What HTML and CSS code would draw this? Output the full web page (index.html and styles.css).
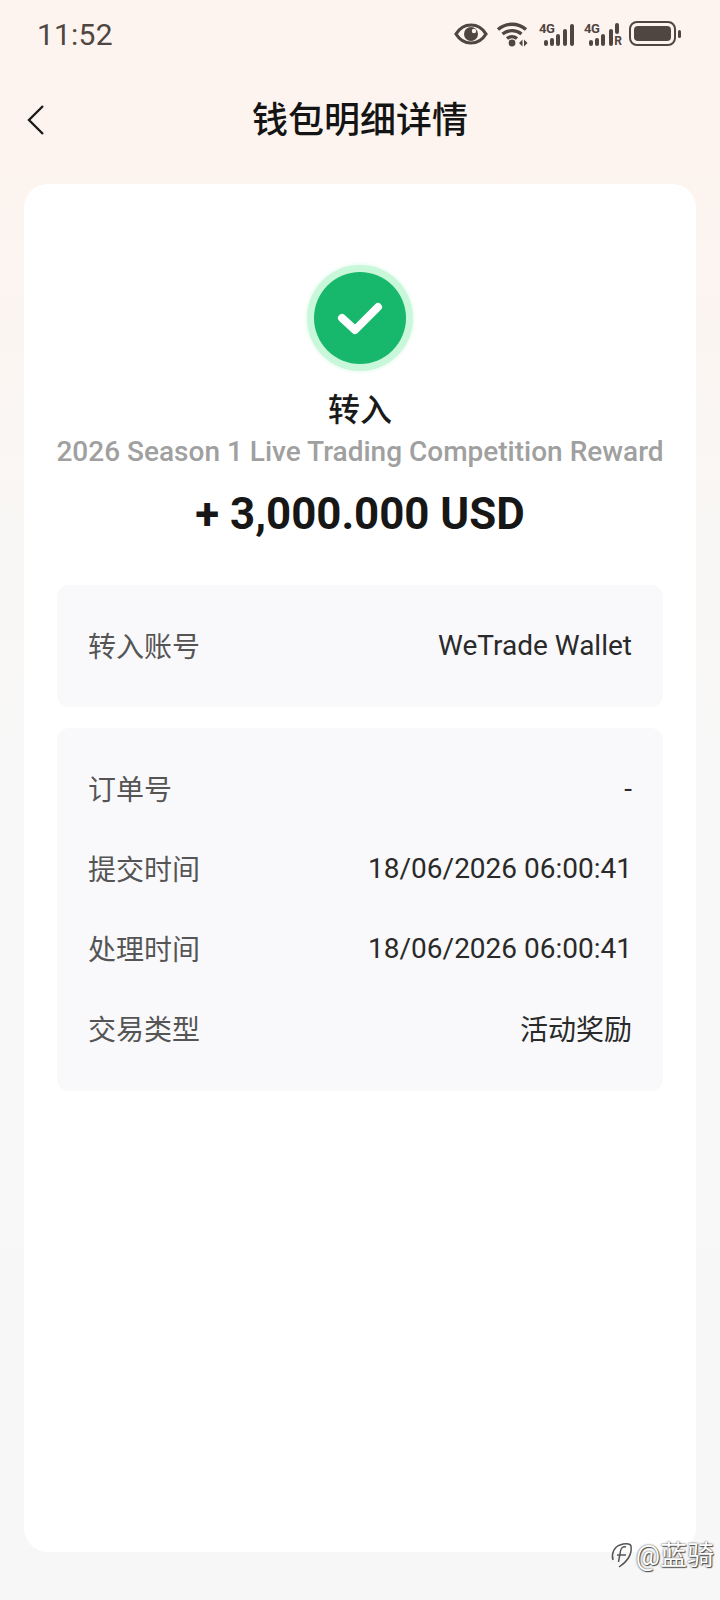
FILE: index.html
```html
<!DOCTYPE html>
<html lang="zh-CN">
<head>
  <meta charset="UTF-8" />
  <meta name="viewport" content="width=device-width, initial-scale=1.0"/>
  <title>钱包明细详情</title>
  <link rel="stylesheet" href="styles.css">
</head>
<body>
  <div class="page">
    <div class="status-bar">
      <span class="clock">11:52</span>
      <div class="status-icons">
        <svg class="eye" width="34" height="24" viewBox="0 0 34 24">
          <path d="M2 12C6 5.500 11 3 17 3s11 2.500 15 9c-4 6.500-9 9-15 9S6 18.500 2 12z" fill="none" stroke="#4f4642" stroke-width="3.200"/>
          <circle cx="17" cy="12" r="7" fill="#4f4642"/>
          <circle cx="20" cy="9" r="2.200" fill="#fdf3ee"/>
        </svg>
        <svg class="wifi" width="34" height="26" viewBox="0 0 34 26">
          <path d="M2 8.500C10 1.500 22 1.500 30 8.500M6.500 13C12 8.500 20 8.500 25.500 13M11 17.500c3-2.400 7-2.400 10 0" fill="none" stroke="#4f4642" stroke-width="3.400"/>
          <circle cx="16" cy="22" r="3.400" fill="#4f4642"/>
          <path d="M23 22l3.500-3.500v7zM28 18.500l3.500 3.500-3.500 3.500z" fill="#4f4642"/>
        </svg>
        <div class="signal">
          <span class="net">4G</span>
          <svg width="40" height="26" viewBox="0 0 40 26">
            <g fill="#4f4642"><rect x="5" y="19" width="4" height="6" rx="2"/><rect x="11" y="17" width="4" height="8" rx="2"/><rect x="17" y="13" width="4" height="12" rx="2"/><rect x="24" y="8" width="4" height="17" rx="2"/><rect x="31" y="3" width="4" height="22" rx="2"/></g>
          </svg>
        </div>
        <div class="signal">
          <span class="net">4G</span>
          <svg width="40" height="26" viewBox="0 0 40 26">
            <g fill="#4f4642"><rect x="5" y="19" width="4" height="6" rx="2"/><rect x="11" y="17" width="4" height="8" rx="2"/><rect x="17" y="13" width="4" height="12" rx="2"/><rect x="25" y="8" width="4" height="17" rx="2"/><rect x="31" y="2" width="4" height="11" rx="2"/></g>
          </svg>
          <span class="roam">R</span>
        </div>
        <div class="battery"><div class="battery-fill"></div></div>
        <div class="battery-cap"></div>
      </div>
    </div>

    <div class="nav-bar">
      <svg class="back" width="20" height="32" viewBox="0 0 20 32">
        <path d="M17 2L3 16l14 14" fill="none" stroke="#1c1c1c" stroke-width="2.400"/>
      </svg>
      <h1>钱包明细详情</h1>
    </div>

    <div class="card">
      <div class="result-icon">
        <svg width="92" height="92" viewBox="0 0 92 92">
          <circle cx="46" cy="46" r="46" fill="#17b76c"/>
          <path d="M28 46l13 12 23-23" fill="none" stroke="#fff" stroke-width="8" stroke-linecap="round" stroke-linejoin="round"/>
        </svg>
      </div>
      <div class="direction">转入</div>
      <div class="remark">2026 Season 1 Live Trading Competition Reward</div>
      <div class="amount">+ 3,000.000 USD</div>

      <div class="panel panel-single">
        <div class="row"><span class="label">转入账号</span><span class="value">WeTrade Wallet</span></div>
      </div>

      <div class="panel panel-list">
        <div class="row"><span class="label">订单号</span><span class="value">-</span></div>
        <div class="row"><span class="label">提交时间</span><span class="value">18/06/2026 06:00:41</span></div>
        <div class="row"><span class="label">处理时间</span><span class="value">18/06/2026 06:00:41</span></div>
        <div class="row"><span class="label">交易类型</span><span class="value">活动奖励</span></div>
      </div>
    </div>

    <div class="watermark">
      <svg width="24" height="30" viewBox="0 0 24 30">
        <path d="M3 19c-2-6 1-13 7-15 4-1.500 10-2 11 1 1 7-3 15-12 21M7 14h9M16 6c-3-1-5 1-5.500 4l-2 11" fill="none" stroke="#555" stroke-width="1.500"/>
      </svg>
      <span>@蓝骑</span>
    </div>
  </div>
</body>
</html>
```

FILE: styles.css
```css
* {
  box-sizing: border-box;
}

body {
  margin: 0;
  font-family: Roboto, "Noto Sans CJK SC", sans-serif;
  background: #f7f7f7;
}

.page {
  position: relative;
  width: 720px;
  height: 1600px;
  overflow: hidden;
  padding-top: 10px;
  background: linear-gradient(to bottom, #fdf4ef 0, #fdf4ef 170px, #f9f7f5 520px, #f8f8f8 800px, #f7f7f7 100%);
}

.status-bar {
  display: flex;
  justify-content: space-between;
  align-items: center;
  height: 46px;
  padding: 1px 39px 0 37px;
}

.clock {
  padding-top: 2px;
  font-size: 30px;
  color: #4f4642;
  letter-spacing: 0.2px;
}

.status-icons {
  display: flex;
  align-items: center;
}

.eye {
  margin-right: 8px;
}

.wifi {
  margin-right: 9px;
}

.signal {
  position: relative;
  width: 40px;
  height: 26px;
  margin-right: 5px;
}

.signal svg {
  display: block;
}

.net {
  position: absolute;
  left: 0;
  top: 3px;
  font-size: 13px;
  line-height: 10px;
  font-weight: 700;
  letter-spacing: -0.5px;
  color: #4f4642;
}

.roam {
  position: absolute;
  right: 2px;
  bottom: 1px;
  font-size: 12px;
  line-height: 10px;
  font-weight: 700;
  color: #4f4642;
}

.battery {
  width: 47px;
  height: 25px;
  padding: 3px;
  border: 2.500px solid #4f4642;
  border-radius: 8px;
}

.battery-fill {
  height: 100%;
  background: #4f4642;
  border-radius: 4px;
}

.battery-cap {
  width: 3px;
  height: 8px;
  margin-left: 2px;
  background: #4f4642;
  border-radius: 2px;
}

.nav-bar {
  position: relative;
  height: 128px;
  padding-top: 43px;
}

.nav-bar h1 {
  margin: 0;
  text-align: center;
  font-size: 36px;
  line-height: 44px;
  font-weight: 500;
  color: #141414;
}

.back {
  position: absolute;
  left: 26px;
  top: 48px;
}

.card {
  display: flex;
  flex-direction: column;
  align-items: center;
  width: 672px;
  height: 1368px;
  margin-left: 24px;
  padding-top: 80px;
  background: #fff;
  border-radius: 24px;
}

.result-icon {
  display: flex;
  align-items: center;
  justify-content: center;
  width: 106px;
  height: 106px;
  margin: 1px 0;
  background: #c9f7da;
  border-radius: 50%;
  box-shadow: 0 0 4px #d6f9e3;
}

.direction {
  margin-top: 18px;
  font-size: 32px;
  line-height: 40px;
  font-weight: 500;
  color: #1a1a1a;
}

.remark {
  margin-top: 3px;
  font-size: 28px;
  line-height: 38px;
  font-weight: 500;
  color: #a0a0a0;
  white-space: nowrap;
}

.amount {
  margin-top: 17px;
  font-size: 43.800px;
  line-height: 52px;
  font-weight: 700;
  color: #171717;
}

.panel {
  width: 606px;
  padding: 0 31px;
  background: #f9f9fb;
  border-radius: 12px;
}

.panel-single {
  display: flex;
  align-items: center;
  height: 122px;
  margin-top: 45px;
  padding-bottom: 2px;
}

.panel-list {
  height: 363px;
  margin-top: 21px;
  padding-top: 20px;
}

.row {
  display: flex;
  justify-content: space-between;
  align-items: center;
  width: 100%;
  height: 80px;
  font-size: 28px;
}

.label {
  color: #555;
}

.value {
  color: #2a2a2a;
}

.watermark {
  position: absolute;
  right: 6px;
  top: 1538px;
  display: flex;
  align-items: center;
  gap: 2px;
  font-size: 27px;
  line-height: 36px;
  color: #fff;
  text-shadow: 0 0 2px #333, 1px 1px 1px #555;
}
```
